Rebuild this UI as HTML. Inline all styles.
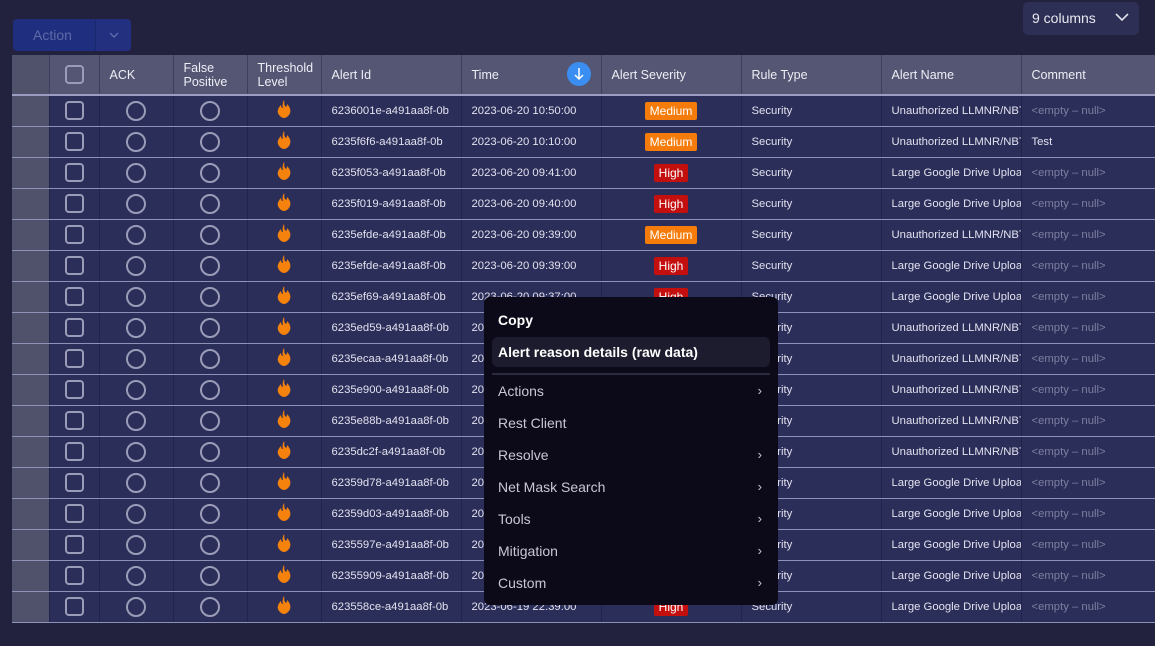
<!DOCTYPE html>
<html><head><meta charset="utf-8"><style>
*{box-sizing:border-box;margin:0;padding:0}
body{width:1155px;height:646px;background:#22223f;font-family:"Liberation Sans",sans-serif;color:#e6e6f0;position:relative;overflow:hidden}
.act{position:absolute;left:13px;top:19px;width:118px;height:32px;background:#1f2e7e;border-radius:4px;display:flex}
.act .l{width:82px;color:#5e6aa8;font-size:14px;line-height:32px;padding-left:20px}
.act .r{flex:1;border-left:1px solid #1c2870;background:#22307f;border-radius:0 4px 4px 0;display:flex;align-items:center;justify-content:center}
.cols{position:absolute;left:1023px;top:2px;width:116px;height:33px;background:#2e2f55;border-radius:5px;font-size:14px;line-height:33px;padding-left:9px;color:#e8e8f0}
.cols svg{position:absolute;right:10px;top:11px}
.wrap{position:absolute;left:12px;top:55px;width:1143px;overflow:hidden}
table{border-collapse:collapse;table-layout:fixed;width:1149px}
td,th{overflow:hidden;white-space:nowrap;font-weight:normal;text-align:left;font-size:11.3px;padding-left:10px;border-right:1px solid #22234a}
th{height:40px;background:#545673;font-size:12.5px;color:#eeeef5;line-height:14px;border-bottom:2px solid #9a9cc0;border-right:1px solid #3e3f5c}
td{height:31px;background:#2c2e5a;border-bottom:1px solid #8f92b8;color:#e2e2ee}
td.g,th.g{background:#50516b;padding:0}
.c{text-align:center;padding:0}
.cb{display:inline-block;width:19px;height:19px;border:2px solid #9a9cb8;border-radius:4px;vertical-align:middle}
.ci{display:inline-block;width:20px;height:20px;border:2px solid #9a9cb8;border-radius:50%;vertical-align:middle}
.b{display:inline-block;color:#fff;font-size:12px;line-height:18px;padding:0 5px;border-radius:2px}
.m{background:#f57c0a}.h{background:#c40f0f}
.e{color:#7d7fa0}
.sort{position:absolute;left:567px;top:62px;width:24px;height:24px;border-radius:50%;background:#3a8ef2}
.menu{position:absolute;left:484px;top:297px;width:294px;height:308px;background:#0c0a19;border-radius:6px}
.it{position:absolute;left:14px;font-size:14px;color:#c8c8d4}
.bo{font-weight:bold;color:#fff}
.hl{position:absolute;left:8px;top:40px;width:278px;height:30px;background:#1d1c2e;border-radius:6px}
.sep{position:absolute;left:8px;top:76px;width:278px;height:2px;background:#2a2a40}
.ar{position:absolute;right:16px;font-size:13px;color:#c8c8d4}
</style></head><body>
<div class="act"><div class="l">Action</div><div class="r"><svg width="10" height="6"><path d="M1 1l4 4 4-4" stroke="#6b76b5" fill="none" stroke-width="1.2"/></svg></div></div>
<div class="cols">9 columns<svg width="14" height="9"><path d="M1 1l6 6 6-6" stroke="#e0e0ea" fill="none" stroke-width="1.6"/></svg></div>
<div class="wrap"><table>
<colgroup><col style="width:37px"><col style="width:50px"><col style="width:74px"><col style="width:74px"><col style="width:74px"><col style="width:140px"><col style="width:140px"><col style="width:140px"><col style="width:140px"><col style="width:140px"><col style="width:140px"></colgroup>
<tr><th class="g"></th><th class="c"><span class="cb"></span></th><th>ACK</th><th>False<br>Positive</th><th>Threshold<br>Level</th><th>Alert Id</th><th>Time</th><th>Alert Severity</th><th>Rule Type</th><th>Alert Name</th><th>Comment</th></tr>
<tbody id="tb">
</tbody></table></div>
<div class="sort"><svg width="24" height="24"><path d="M12 6v11M8 13l4 4 4-4" stroke="#fff" fill="none" stroke-width="1.5"/></svg></div>
<div class="menu">
<div class="hl"></div><div class="sep"></div>
<div class="it bo" style="top:15px">Copy</div>
<div class="it bo" style="top:47px">Alert reason details (raw data)</div>
<div class="it" style="top:86px">Actions</div><div class="ar" style="top:86px">›</div>
<div class="it" style="top:118px">Rest Client</div>
<div class="it" style="top:150px">Resolve</div><div class="ar" style="top:150px">›</div>
<div class="it" style="top:182px">Net Mask Search</div><div class="ar" style="top:182px">›</div>
<div class="it" style="top:214px">Tools</div><div class="ar" style="top:214px">›</div>
<div class="it" style="top:246px">Mitigation</div><div class="ar" style="top:246px">›</div>
<div class="it" style="top:278px">Custom</div><div class="ar" style="top:278px">›</div>
</div>
<script>
var rows=[["6236001e-a491aa8f-0b","2023-06-20 10:50:00","m",0,"<empty – null>"],
["6235f6f6-a491aa8f-0b","2023-06-20 10:10:00","m",0,"Test"],
["6235f053-a491aa8f-0b","2023-06-20 09:41:00","h",1],
["6235f019-a491aa8f-0b","2023-06-20 09:40:00","h",1],
["6235efde-a491aa8f-0b","2023-06-20 09:39:00","m",0],
["6235efde-a491aa8f-0b","2023-06-20 09:39:00","h",1],
["6235ef69-a491aa8f-0b","2023-06-20 09:37:00","h",1],
["6235ed59-a491aa8f-0b","2023-06-20 09:30:00","h",0],
["6235ecaa-a491aa8f-0b","2023-06-20 09:27:00","h",0],
["6235e900-a491aa8f-0b","2023-06-20 09:15:00","h",0],
["6235e88b-a491aa8f-0b","2023-06-20 09:13:00","h",0],
["6235dc2f-a491aa8f-0b","2023-06-20 08:20:00","h",0],
["62359d78-a491aa8f-0b","2023-06-20 03:50:00","h",1],
["62359d03-a491aa8f-0b","2023-06-20 03:48:00","h",1],
["6235597e-a491aa8f-0b","2023-06-19 22:59:00","h",1],
["62355909-a491aa8f-0b","2023-06-19 22:57:00","h",1],
["623558ce-a491aa8f-0b","2023-06-19 22:39:00","h",1]];
var fire='<svg width="16" height="20" viewBox="0 0 16 20"><path d="M8 1c1 3-1 4 2 7 1-1 1-2 1-3 3 3 4 6 3 9-1 3-4 5-6 5s-5-2-6-5c-1-3 1-6 3-8 0 2 1 3 2 3-1-3 0-6 1-8z" fill="#f5820d"/></svg>';
var h='';rows.forEach(function(r){var c=r[4]||"<empty – null>";
h+='<tr><td class="g"></td><td class="c"><span class="cb"></span></td><td class="c"><span class="ci"></span></td><td class="c"><span class="ci"></span></td><td class="c">'+fire+'</td><td>'+r[0]+'</td><td>'+r[1]+'</td><td class="c"><span class="b '+r[2]+'">'+(r[2]=="m"?"Medium":"High")+'</span></td><td>Security</td><td>'+(r[3]?"Large Google Drive Upload":"Unauthorized LLMNR/NBT-NS")+'</td><td class="'+(c=="Test"?"":"e")+'">'+c.replace("<","&lt;").replace(">","&gt;")+'</td></tr>';});
document.getElementById('tb').innerHTML=h;
</script>
</body></html>
